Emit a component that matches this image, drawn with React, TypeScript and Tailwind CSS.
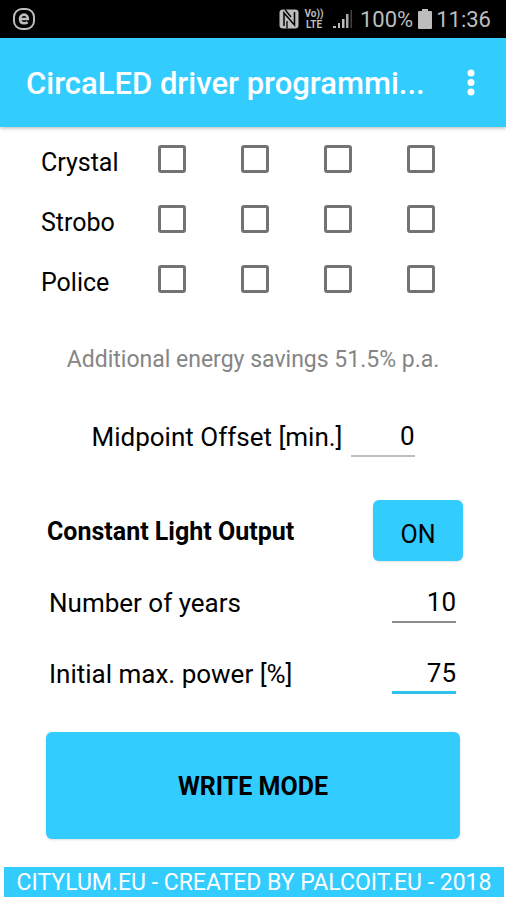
import React from "react";

const effects = ["Crystal", "Strobo", "Police"];
const channels = [1, 2, 3, 4];

function StatusBar() {
  return (
    <div className="flex h-[38px] items-center justify-between bg-black pr-[15px] pl-3 text-[#bdbdbd]">
      <svg className="h-6 w-6" viewBox="0 0 24 24" fill="none" stroke="currentColor">
        <rect x="2" y="2" width="20" height="20" rx="8" strokeWidth="2" />
        <path d="M7.8 12h8c0-2.8-1.4-4.4-3.7-4.4S8 9.4 8 12c0 2.7 1.6 4.3 4.2 4.3 1.5 0 2.6-.4 3.4-1.2" strokeWidth="2.6" />
      </svg>
      <div className="flex items-center">
        <svg className="h-5 w-5" viewBox="0 0 20 20">
          <path d="M4 .5h12q3.500 0 3.500 3v13q0 3-3.500 3H4q-3.500 0-3.500-3v-13q0-3 3.500-3z" fill="currentColor" />
          <path d="M5 17V4l10.500 12V3" fill="none" stroke="#000" strokeWidth="1.5" />
          <path d="M8 19.500V12M6 .5l6 7.500" fill="none" stroke="#000" strokeWidth="1.3" />
        </svg>
        <div className="ml-1 flex w-[22px] flex-col items-center text-[10px] leading-[11px] font-bold">
          <span>Vo))</span>
          <span>LTE</span>
        </div>
        <svg className="ml-2 h-5 w-5" viewBox="0 0 20 20" fill="currentColor">
          <path d="M0 19v-2h3v2zM5 19v-5h2v5zM9 19v-9h2.500v9z" />
          <path d="M13 19V5h2.500v14z" opacity=".9" />
          <path d="M17.500 19V1h1.500v18z" opacity=".35" />
        </svg>
        <span className="ml-[7px] text-[22px]">100%</span>
        <svg className="ml-[5px] h-5 w-[14px]" viewBox="0 0 14 20" fill="currentColor">
          <path d="M4 0h6v2h3q1 0 1 1v16q0 1-1 1H1q-1 0-1-1V3q0-1 1-1h3z" />
        </svg>
        <span className="ml-1 text-[22px]">11:36</span>
      </div>
    </div>
  );
}

function Toolbar() {
  return (
    <header className="relative flex h-[89px] items-center bg-[#33ccff] pl-[26px] text-white shadow-[0_1px_4px_rgba(0,0,0,0.3)]">
      <h1 className="min-w-0 flex-1 pt-[3px] text-[31px] font-medium whitespace-nowrap">CircaLED driver programmi...</h1>
      <button type="button" aria-label="More options" className="flex h-12 w-[70px] items-center justify-center">
        <svg className="h-7 w-7" viewBox="0 0 28 28" fill="currentColor">
          <circle cx="14" cy="4" r="3.5" />
          <circle cx="14" cy="13.5" r="3.5" />
          <circle cx="14" cy="23" r="3.5" />
        </svg>
      </button>
    </header>
  );
}

function EffectRow({ name }: { name: string }) {
  return (
    <div className="grid h-[60px] grid-cols-[117px_repeat(4,1fr)] items-center">
      <span className="pt-[7px]">{name}</span>
      {channels.map((channel) => (
        <input
          key={channel}
          type="checkbox"
          aria-label={`${name} ${channel}`}
          className="h-7 w-7 appearance-none rounded-[3px] border-3 border-[#737373] checked:bg-[#33ccff]"
        />
      ))}
    </div>
  );
}

type FieldProps = {
  id: string;
  label: string;
  value: string;
  line: string;
};

function Field({ id, label, value, line }: FieldProps) {
  return (
    <>
      <label htmlFor={id}>{label}</label>
      <input
        id={id}
        type="text"
        inputMode="numeric"
        defaultValue={value}
        className={`h-10 w-16 text-right outline-none ${line}`}
      />
    </>
  );
}

export default function App() {
  return (
    <div className="min-h-screen bg-white font-[Roboto,sans-serif] text-[25px] text-black">
      <StatusBar />
      <Toolbar />

      <main>
        <div className="pt-[2px] pr-4 pl-[41px]">
          {effects.map((name) => (
            <EffectRow key={name} name={name} />
          ))}
        </div>

        <p className="mt-[35px] text-center text-[23px] leading-8 text-[#858585]">
          Additional energy savings 51.5% p.a.
        </p>

        <div className="mt-[41px] flex items-center justify-center gap-2 text-[26px]">
          <Field id="offset" label="Midpoint Offset [min.]" value="0" line="border-b-2 border-[#bfbfbf]" />
        </div>

        <div className="mt-[43px] flex items-center justify-between pr-[43px] pl-[47px]">
          <h2 className="pt-[3px] font-bold">Constant Light Output</h2>
          <button type="button" className="h-[61px] w-[90px] rounded-md bg-[#33ccff] pt-2 shadow-sm">
            ON
          </button>
        </div>

        <div className="mt-[22px] flex items-center justify-between pr-[50px] pl-[49px] text-[26px]">
          <Field id="years" label="Number of years" value="10" line="border-b-2 border-[#8c8c8c]" />
        </div>
        <div className="mt-[31px] flex items-center justify-between pr-[50px] pl-[49px] text-[26px]">
          <Field id="power" label="Initial max. power [%]" value="75" line="border-b-3 border-[#2fc0ec]" />
        </div>

        <div className="mt-[38px] px-[46px]">
          <button type="button" className="h-[107px] w-full rounded-md bg-[#33ccff] pt-[3px] font-bold shadow-sm">
            WRITE MODE
          </button>
        </div>
      </main>

      <footer className="mt-7 mr-[2px] ml-1 h-[30px] bg-[#33ccff] text-center text-[23px] leading-[32px] text-white">
        CITYLUM.EU - CREATED BY PALCOIT.EU - 2018
      </footer>
    </div>
  );
}
